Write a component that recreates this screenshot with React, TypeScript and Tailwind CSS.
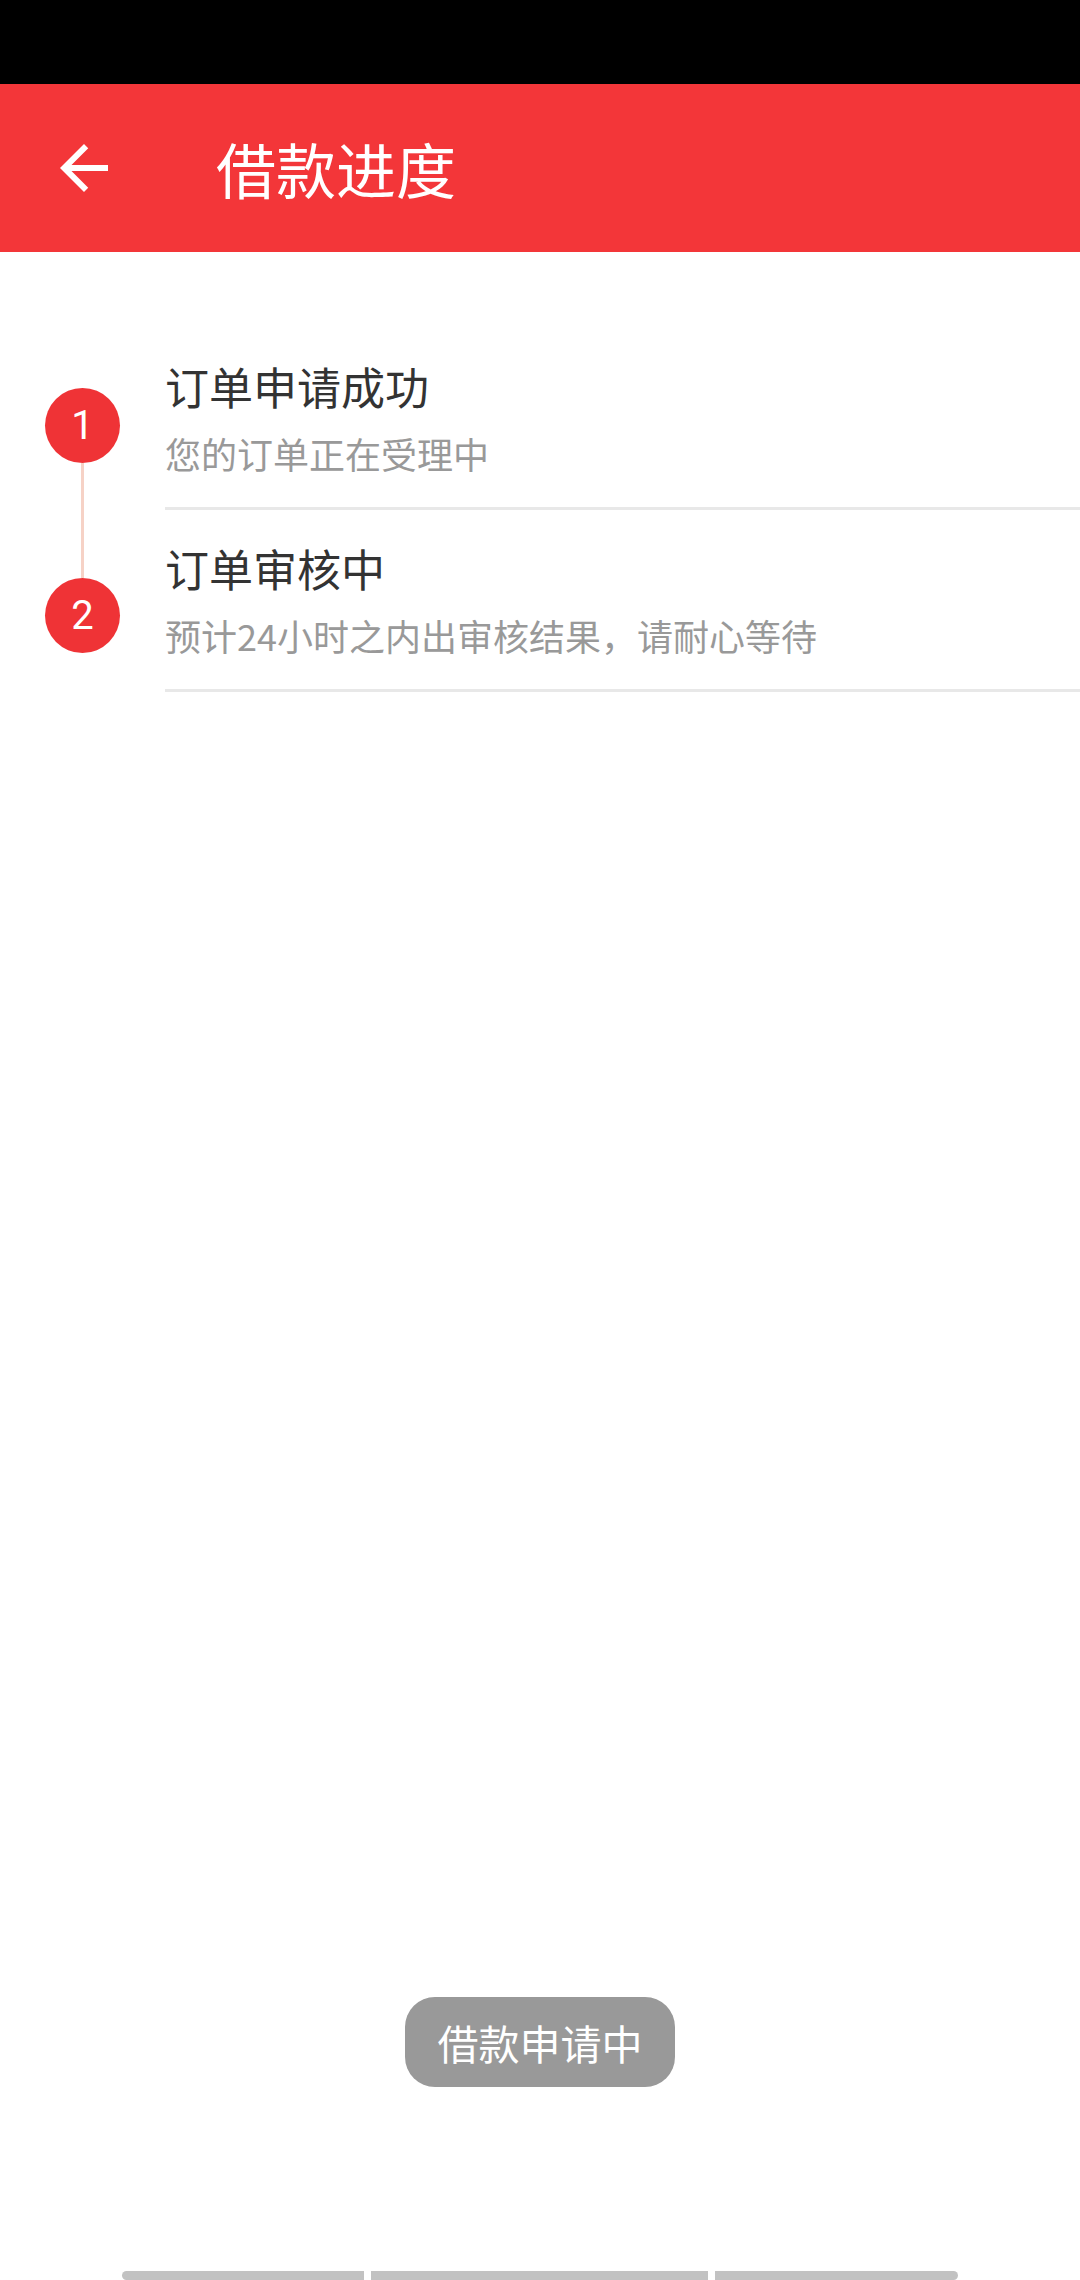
// Loan progress screen: red app bar, two-step vertical timeline, toast.

const steps = [
  { no: 1, title: "订单申请成功", desc: "您的订单正在受理中" },
  { no: 2, title: "订单审核中", desc: "预计24小时之内出审核结果，请耐心等待" },
];

function BackArrow() {
  return (
    <svg viewBox="0 0 24 24" className="size-[72px]" fill="#ffffff">
      <path d="M20 11H7.83l5.59-5.59L12 4l-8 8 8 8 1.41-1.41L7.83 13H20v-2z" />
    </svg>
  );
}

export default function App() {
  return (
    <div
      className="relative flex h-[2280px] w-[1080px] flex-col overflow-hidden bg-white"
      style={{ fontFamily: '"Noto Sans CJK SC", "Noto Sans", sans-serif' }}
    >
      {/* Status bar */}
      <div className="h-[84px] shrink-0 bg-black" />

      {/* App bar */}
      <div className="flex h-[168px] shrink-0 items-center bg-[#f33639] pl-[48px]">
        <BackArrow />
        <span className="ml-[96px] text-[60px] leading-[80px] text-white">借款进度</span>
      </div>

      {/* Timeline */}
      <div className="flex">
        {/* Step markers */}
        <div className="flex w-[165px] shrink-0 flex-col items-center pt-[136px]">
          <div className="flex size-[75px] items-center justify-center rounded-full bg-[#ef3336] font-['Roboto'] text-[40px] leading-none text-white">
            1
          </div>
          <div className="h-[115px] w-[3px] bg-[#f6d2c6]" />
          <div className="flex size-[75px] items-center justify-center rounded-full bg-[#ef3336] font-['Roboto'] text-[40px] leading-none text-white">
            2
          </div>
        </div>

        {/* Step texts */}
        <div className="flex flex-1 flex-col pt-[76px]">
          {steps.map((s) => (
            <div key={s.no} className="border-b-[3px] border-[#e8e8e8] pt-[28px] pb-[30px]">
              <div className="text-[44px] leading-[60px] text-[#333333]">{s.title}</div>
              <div className="mt-[13px] text-[36px] leading-[48px] text-[#999999]">{s.desc}</div>
            </div>
          ))}
        </div>
      </div>

      <div className="flex-1" />

      {/* Navigation bar segments */}
      <div className="flex h-[9px] shrink-0 justify-center gap-[7px]">
        <div className="w-[242px] rounded-l-full bg-[#c2c2c2]" />
        <div className="w-[337px] bg-[#c2c2c2]" />
        <div className="w-[243px] rounded-r-full bg-[#c2c2c2]" />
      </div>

      {/* Toast */}
      <div className="absolute top-[1997px] left-1/2 flex h-[90px] w-[270px] -translate-x-1/2 items-center justify-center rounded-[30px] bg-[#999999]">
        <span className="text-[41px] leading-none text-white">借款申请中</span>
      </div>
    </div>
  );
}
